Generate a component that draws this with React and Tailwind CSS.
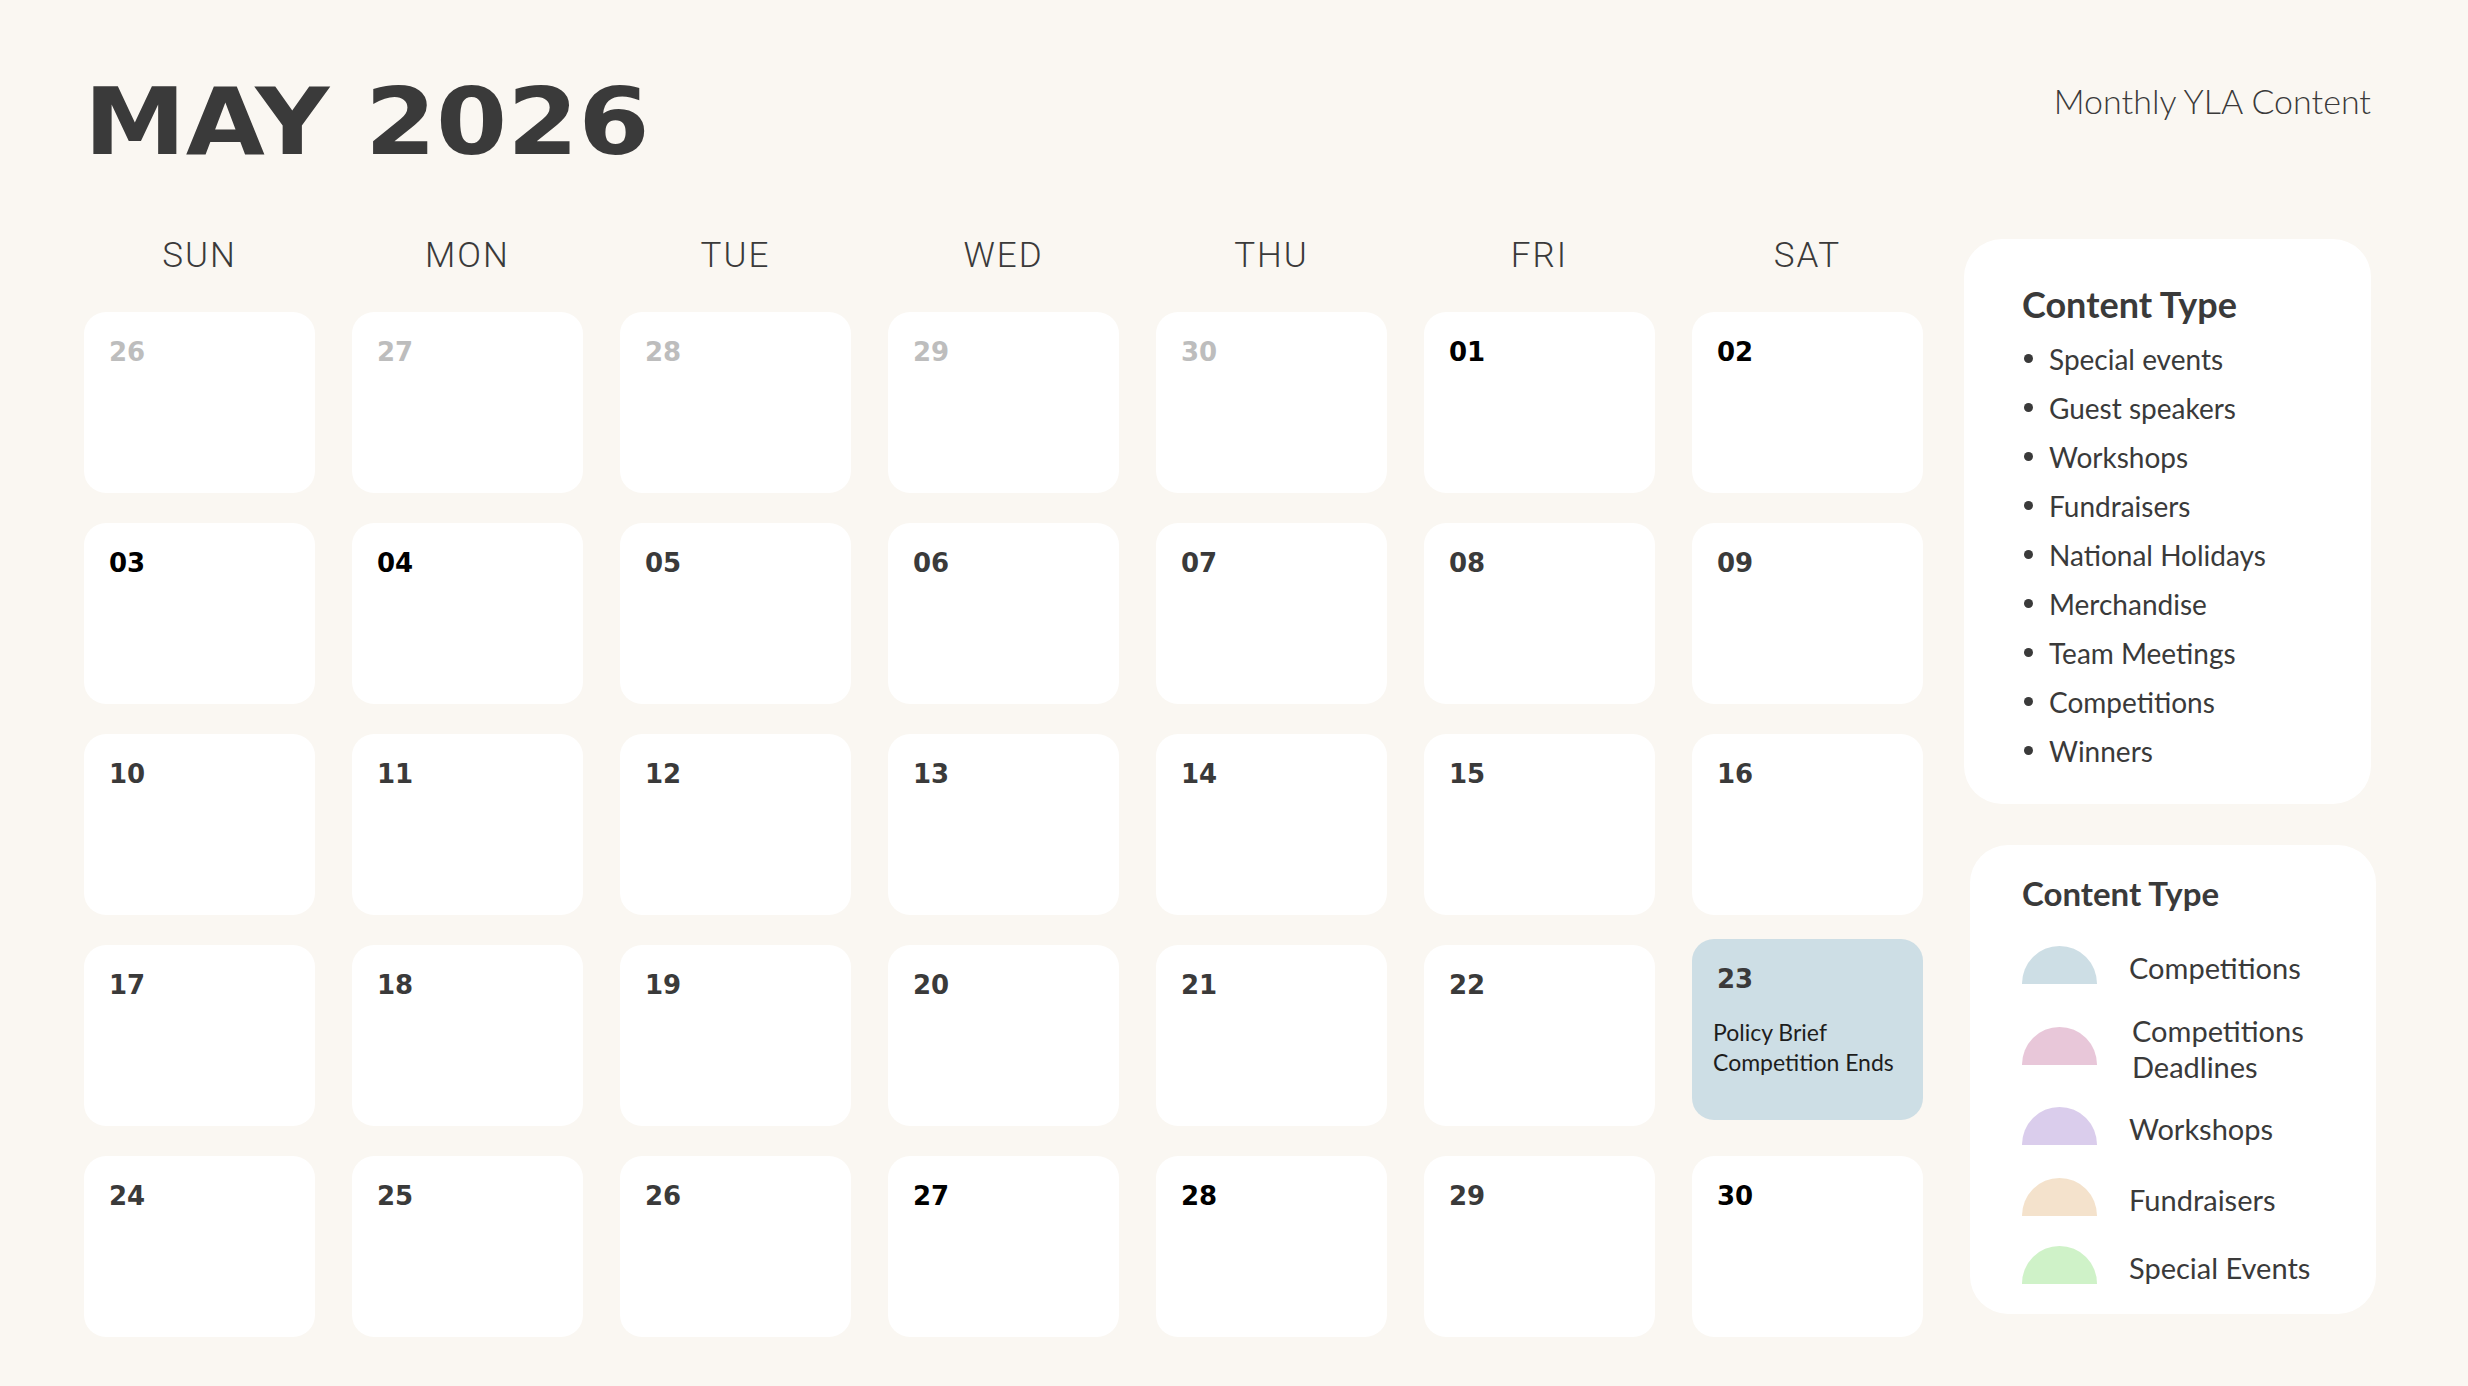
const weeks = [
  [
    { d: '26', tone: 'muted' },
    { d: '27', tone: 'muted' },
    { d: '28', tone: 'muted' },
    { d: '29', tone: 'muted' },
    { d: '30', tone: 'muted' },
    { d: '01', tone: 'black' },
    { d: '02', tone: 'black' },
  ],
  [
    { d: '03', tone: 'black' },
    { d: '04', tone: 'black' },
    { d: '05' },
    { d: '06' },
    { d: '07' },
    { d: '08' },
    { d: '09' },
  ],
  [{ d: '10' }, { d: '11' }, { d: '12' }, { d: '13' }, { d: '14' }, { d: '15' }, { d: '16' }],
  [
    { d: '17' },
    { d: '18' },
    { d: '19' },
    { d: '20' },
    { d: '21' },
    { d: '22' },
    { d: '23', event: ['Policy Brief', 'Competition Ends'] },
  ],
  [
    { d: '24' },
    { d: '25' },
    { d: '26' },
    { d: '27', tone: 'black' },
    { d: '28', tone: 'black' },
    { d: '29' },
    { d: '30', tone: 'black' },
  ],
];

const days = ['SUN', 'MON', 'TUE', 'WED', 'THU', 'FRI', 'SAT'];

const contentTypes = [
  'Special events',
  'Guest speakers',
  'Workshops',
  'Fundraisers',
  'National Holidays',
  'Merchandise',
  'Team Meetings',
  'Competitions',
  'Winners',
];

// legend rows aren't evenly spaced in the original, so each keeps its own gap
const legend = [
  { label: ['Competitions'], color: 'bg-[#cddee5]', gap: 'mt-[36px]' },
  { label: ['Competitions', 'Deadlines'], color: 'bg-[#e8c7d9]', gap: 'mt-[43px]' },
  { label: ['Workshops'], color: 'bg-[#dacdec]', gap: 'mt-[42px]' },
  { label: ['Fundraisers'], color: 'bg-[#f4e2cc]', gap: 'mt-[33px]' },
  { label: ['Special Events'], color: 'bg-[#cff2c8]', gap: 'mt-[30px]' },
];

const toneClass = {
  muted: 'text-[#bdbdbd]',
  black: 'text-black',
};

function DayCell({ day }) {
  const bg = day.event ? 'bg-[#cddee5] -mt-[6px]' : 'bg-white';
  return (
    <div className={`h-[181px] rounded-[22px] ${bg} pt-[27px] pl-[25px]`}>
      <div
        className={`font-['DejaVu_Sans',sans-serif] font-bold text-[26px] leading-none ${toneClass[day.tone] || 'text-[#3a3a3a]'}`}
      >
        {day.d}
      </div>
      {day.event && (
        <div className="mt-[25px] -ml-[4px] font-['Lato',sans-serif] text-[23px] leading-[30px] text-[#1d1d1d]">
          {day.event.map((line) => (
            <div key={line}>{line}</div>
          ))}
        </div>
      )}
    </div>
  );
}

export default function App() {
  return (
    <div className="w-[2468px] h-[1386px] bg-[#faf7f2] flex overflow-hidden">
      <div className="pl-[84px] pt-[76px]">
        <h1 className="origin-left scale-x-110 font-['DejaVu_Sans',sans-serif] font-bold text-[93px] leading-none text-[#3a3a3a]">
          MAY 2026
        </h1>

        <div className="mt-[69px] grid grid-cols-[repeat(7,231px)] gap-x-[37px]">
          {days.map((d) => (
            <div
              key={d}
              className="text-center font-['Roboto',sans-serif] font-light text-[35px] leading-none tracking-[2px] text-[#3a3a3a]"
            >
              {d}
            </div>
          ))}
        </div>

        <div className="mt-[39px] grid grid-cols-[repeat(7,231px)] gap-x-[37px] gap-y-[30px]">
          {weeks.flat().map((day, i) => (
            <DayCell key={i} day={day} />
          ))}
        </div>
      </div>

      <div className="ml-[41px] pt-[84px] w-[413px]">
        <div className="w-[407px] text-right font-['Lato',sans-serif] font-light text-[34px] leading-none text-[#3a3a3a]">
          Monthly YLA Content
        </div>

        <div className="mt-[121px] w-[407px] h-[565px] rounded-[38px] bg-white pt-[47px] pl-[58px]">
          <h2 className="font-['Lato',sans-serif] font-bold text-[36px] leading-none text-[#3a3a3a]">
            Content Type
          </h2>
          <ul className="mt-[12px]">
            {contentTypes.map((t) => (
              <li key={t} className="flex items-center h-[49px] font-['Lato',sans-serif] text-[28px] text-[#3a3a3a]">
                <span className="w-[9px] h-[9px] rounded-full bg-[#3a3a3a] ml-[2px] mr-[16px]" />
                <span>{t}</span>
              </li>
            ))}
          </ul>
        </div>

        <div className="mt-[41px] ml-[6px] w-[406px] h-[469px] rounded-[38px] bg-white pt-[32px] pl-[52px]">
          <h2 className="font-['Lato',sans-serif] font-bold text-[33px] leading-none text-[#3a3a3a]">
            Content Type
          </h2>
          {legend.map((row, i) => (
            <div key={i} className={`${row.gap} flex items-center h-[38px]`}>
              <span className={`w-[75px] h-[38px] rounded-t-full ${row.color}`} />
              <div
                className={`${i === 1 ? 'ml-[35px]' : 'ml-[32px]'} mt-[6px] font-['Lato',sans-serif] text-[29px] leading-[36px] text-[#3a3a3a]`}
              >
                {row.label.map((l) => (
                  <div key={l}>{l}</div>
                ))}
              </div>
            </div>
          ))}
        </div>
      </div>
    </div>
  );
}
